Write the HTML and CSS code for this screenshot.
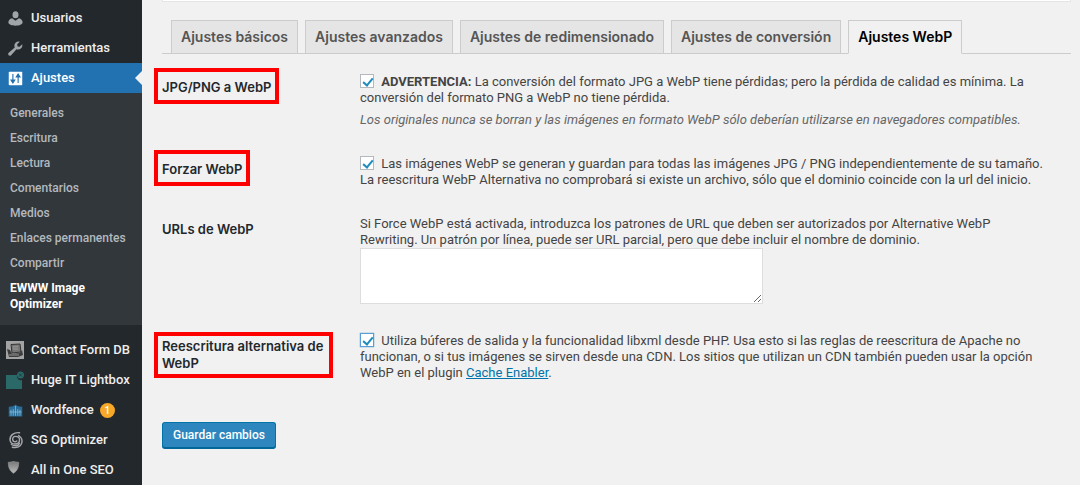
FILE: index.html
```html
<!DOCTYPE html>
<html lang="es">
  <head>
    <meta charset="UTF-8" />
    <meta name="viewport" content="width=device-width, initial-scale=1.0" />
    <title>EWWW Image Optimizer</title>
    <link rel="stylesheet" href="styles.css">
  </head>
  <body>
    <nav class="admin-menu">
      <ul class="menu">
        <li>
          <a href="#" class="menu-item">
            <svg class="icon" viewBox="0 0 20 20" fill="#a0a5aa"><ellipse cx="10" cy="5" rx="4" ry="4.800" /><path d="M5.500 9.500 10 13l4.500-3.500c3 .8 5 2.700 5 5.500 0 3-4.500 4.500-9.500 4.500S.5 18 .5 15c0-2.800 2-4.700 5-5.500z" /></svg>
            Usuarios
          </a>
        </li>
        <li>
          <a href="#" class="menu-item">
            <svg class="icon" viewBox="1 1 18 18" fill="#a0a5aa"><path d="M16.700 9.800c-1.500 1.500-3.700 1.800-5.500 1l-6.500 7.200c-.9.900-2.100.9-2.900.1s-.8-2 .1-2.900l7.200-6.500c-.8-1.800-.5-4 1-5.500 1.400-1.400 3.300-1.800 5-1.200L12 5l.5 2.500L15 8l3-3.100c.5 1.700.1 3.500-1.300 4.900z" /></svg>
            Herramientas
          </a>
        </li>
        <li>
          <a href="#" class="menu-item current">
            <svg class="icon" viewBox="0 0 20 20"><rect x="1" y="1" width="18" height="18" rx="1" fill="#fff" /><path d="M6.500 4v11M4 12h5l-2.500 4zM13.500 5v11M11 8h5l-2.500-4z" fill="#2271b1" stroke="#2271b1" stroke-width="1.500" /></svg>
            Ajustes
          </a>
          <ul class="submenu">
            <li><a href="#">Generales</a></li>
            <li><a href="#">Escritura</a></li>
            <li><a href="#">Lectura</a></li>
            <li><a href="#">Comentarios</a></li>
            <li><a href="#">Medios</a></li>
            <li><a href="#">Enlaces permanentes</a></li>
            <li><a href="#">Compartir</a></li>
            <li><a href="#" class="active">EWWW Image Optimizer</a></li>
          </ul>
        </li>
      </ul>

      <ul class="menu">
        <li>
          <a href="#" class="menu-item">
            <svg class="icon icon-large" viewBox="0 0 18 18"><rect width="18" height="18" fill="#a3a3a3" /><path d="M5 3.500 14 3l1 8-9 1z" fill="#777" stroke="#333" /><path d="M1 8l3 1 2 4 8-1 2-3 1 5-5 2H3z" fill="#3c3c3c" /><path d="M3 14h10M7 6l5-.5M7 8h5" stroke="#999" /></svg>
            Contact Form DB
          </a>
        </li>
        <li>
          <a href="#" class="menu-item">
            <svg class="icon icon-large" viewBox="0 0 18 18"><path d="M0 4h11a4 4 0 0 0 5 5v9H0z" fill="#2b6868" /><circle cx="14.500" cy="4" r="3.500" fill="#2b6868" /><path d="m13 2.500 3 3m0-3-3 3" stroke="#1d3f45" /></svg>
            Huge IT Lightbox
          </a>
        </li>
        <li>
          <a href="#" class="menu-item">
            <svg class="icon" viewBox="0 0 20 20"><path d="M1 5c4 0 7-1 9-3 2 2 5 3 9 3v13H1z" fill="#286d99" /><path d="M4 17V9m3 8V8m3 9V4m3 13V8m3 9V9M2 12h16" stroke="#8fbdd8" stroke-width="1" /></svg>
            Wordfence <span class="badge">1</span>
          </a>
        </li>
        <li>
          <a href="#" class="menu-item">
            <svg class="icon icon-large" viewBox="0 0 20 20" fill="none" stroke="#a5a7aa" stroke-width="1.600" stroke-linecap="round"><path d="M15 2C9 1 4 5 4.500 10c.3 3 2.500 4.500 5.500 4.500 3.500 0 5-2 5-4.500s-2-4-4.500-4S7 8 7.500 10s3 2.500 4.500 1" /><path d="M14 5c3 2 4.500 5 3.500 8.500S12 19.500 7 18m-1-3c4 2.500 8 1.500 9-1.500" /></svg>
            SG Optimizer
          </a>
        </li>
        <li>
          <a href="#" class="menu-item">
            <svg class="icon icon-shield" viewBox="0 0 20 20"><defs><linearGradient id="shield" x2="0" y2="1"><stop stop-color="#777" /><stop offset="1" stop-color="#bbb" /></linearGradient></defs><path d="M2 2c3 0 6-.5 8-1.500 2 1 5 1.500 8 1.500 0 8-2 13-8 17C4 15 2 10 2 2z" fill="url(#shield)" stroke="#999" /></svg>
            All in One SEO
          </a>
        </li>
      </ul>
    </nav>

    <main class="content">
      <div class="postbox"></div>

      <div class="tabs">
        <a href="#" class="tab">Ajustes básicos</a>
        <a href="#" class="tab">Ajustes avanzados</a>
        <a href="#" class="tab">Ajustes de redimensionado</a>
        <a href="#" class="tab">Ajustes de conversión</a>
        <a href="#" class="tab tab-active">Ajustes WebP</a>
      </div>

      <form>
        <table class="form-table">
          <tr>
            <th><label for="webp" class="marked">JPG/PNG a WebP</label></th>
            <td>
              <input type="checkbox" id="webp" checked> <b>ADVERTENCIA:</b> La conversión del formato JPG a WebP tiene pérdidas; pero la pérdida de calidad es mínima. La conversión del formato PNG a WebP no tiene pérdida.
              <p class="description">Los originales nunca se borran y las imágenes en formato WebP sólo deberían utilizarse en navegadores compatibles.</p>
            </td>
          </tr>
          <tr>
            <th><label for="force" class="marked">Forzar WebP</label></th>
            <td>
              <input type="checkbox" id="force" checked> Las imágenes WebP se generan y guardan para todas las imágenes JPG / PNG independientemente de su tamaño. La reescritura WebP Alternativa no comprobará si existe un archivo, sólo que el dominio coincide con la url del inicio.
            </td>
          </tr>
          <tr>
            <th><label for="paths">URLs de WebP</label></th>
            <td>
              Si Force WebP está activada, introduzca los patrones de URL que deben ser autorizados por Alternative WebP Rewriting. Un patrón por línea, puede ser URL parcial, pero que debe incluir el nombre de dominio.
              <textarea id="paths"></textarea>
            </td>
          </tr>
          <tr>
            <th><label for="alt" class="marked marked-tight">Reescritura alternativa de WebP</label></th>
            <td>
              <input type="checkbox" id="alt" class="focused" checked> Utiliza búferes de salida y la funcionalidad libxml desde PHP. Usa esto si las reglas de reescritura de Apache no funcionan, o si tus imágenes se sirven desde una CDN. Los sitios que utilizan un CDN también pueden usar la opción WebP en el plugin <a href="#">Cache Enabler</a>.
            </td>
          </tr>
        </table>
        <button type="submit" class="button-primary">Guardar cambios</button>
      </form>
    </main>
  </body>
</html>
```

FILE: styles.css
```css
* {
  box-sizing: border-box;
}
body {
  margin: 0;
  display: flex;
  min-height: 100vh;
  background-color: #f1f1f1;
  color: #444;
  font-family: Roboto, "Liberation Sans", sans-serif;
  font-size: 13px;
  line-height: 16px;
}
ul {
  list-style: none;
  margin: 0;
  padding: 0;
}

/* sidebar */
.admin-menu {
  flex: none;
  width: 142px;
  padding-top: 3px;
  background-color: #23282d;
}
.menu {
  margin-bottom: 10px;
}
.menu:last-child {
  margin-bottom: 0;
}
.menu-item {
  position: relative;
  display: flex;
  align-items: center;
  height: 30px;
  padding-left: 31px;
  color: #eee;
  font-weight: 500;
  text-decoration: none;
  white-space: nowrap;
}
.icon {
  position: absolute;
  left: 8px;
  width: 15px;
  height: 15px;
}
.icon-large {
  left: 6px;
  width: 18px;
  height: 18px;
}
.icon-shield {
  left: 7px;
  top: 6px;
  width: 13px;
  height: 13px;
}
.current {
  background-color: #2271b1;
  color: #fff;
}
.current::after {
  content: "";
  position: absolute;
  right: 0;
  border: 7px solid transparent;
  border-right-color: #f1f1f1;
  border-left: 0;
}
.submenu {
  padding: 8px 10px;
  background-color: #32373c;
}
.submenu a {
  display: block;
  padding: 4px 0 5px;
  color: #b4b9be;
  font-size: 12px;
  font-weight: 500;
  text-decoration: none;
}
.submenu .active {
  color: #fff;
  font-weight: 700;
}
.badge {
  width: 15px;
  height: 15px;
  margin-left: 6px;
  border-radius: 50%;
  background-color: #f7a828;
  color: #fff;
  font-size: 10px;
  line-height: 15px;
  text-align: center;
}

/* settings page */
.content {
  flex: 1;
  padding: 0 9px 0 20px;
}
.postbox {
  height: 2px;
  background-color: #fff;
  border: 1px solid #e5e5e5;
  border-top: 0;
}
.tabs {
  display: flex;
  gap: 7px;
  margin-top: 18px;
  padding-left: 9px;
  border-bottom: 1px solid #ccc;
}
.tab {
  margin-bottom: -1px;
  padding: 6px 9px;
  border: 1px solid #ccc;
  background-color: #e5e5e5;
  color: #555;
  font-family: Inter, sans-serif;
  font-size: 14px;
  font-weight: 600;
  line-height: 20px;
  text-decoration: none;
  white-space: nowrap;
}
.tab-active {
  border-bottom-color: #f1f1f1;
  background-color: #f1f1f1;
  color: #000;
}
.form-table {
  width: 100%;
  margin-top: 6px;
  border-collapse: collapse;
}
.form-table th {
  width: 198px;
  padding: 19px 35px 14px 0;
  color: #23282d;
  font-family: Inter, sans-serif;
  font-weight: 600;
  line-height: 17px;
  text-align: left;
  vertical-align: top;
}
.form-table td {
  padding: 14px 22px 14px 0;
  vertical-align: top;
}
.marked {
  position: relative;
  display: inline-block;
}
.marked::after {
  content: "";
  position: absolute;
  inset: -11px -8px -8px;
  border: 4px solid #f00;
}
.marked-tight::after {
  inset: -6px -8px;
}
.description {
  margin: 6px 0 0;
  color: #666;
  font-style: italic;
}
input[type="checkbox"] {
  appearance: none;
  position: relative;
  width: 14px;
  height: 14px;
  margin: 0 4px 0 0;
  border: 1px solid #b4b9be;
  background-color: #fff;
  vertical-align: -2px;
}
input[type="checkbox"]:checked::before {
  content: "";
  position: absolute;
  left: 4px;
  top: 1px;
  width: 4px;
  height: 8px;
  border: solid #1e8cbe;
  border-width: 0 2px 2px 0;
  transform: rotate(40deg);
}
input.focused {
  border-color: #5b9dd9;
  box-shadow: 0 0 1px #1e8cbe;
}
textarea {
  display: block;
  width: 403px;
  max-width: 100%;
  height: 56px;
  margin-bottom: 1px;
  border: 1px solid #ddd;
  background-color: #fff;
  font: inherit;
}
td a {
  color: #0073aa;
}
.button-primary {
  height: 26px;
  margin-top: 27px;
  padding: 0 10px;
  border: 1px solid #0073aa;
  border-bottom-color: #006799;
  border-radius: 3px;
  background-color: #2e86be;
  box-shadow: 0 1px 0 #006799;
  color: #fff;
  font: inherit;
  font-size: 12px;
  font-weight: 500;
}
```
